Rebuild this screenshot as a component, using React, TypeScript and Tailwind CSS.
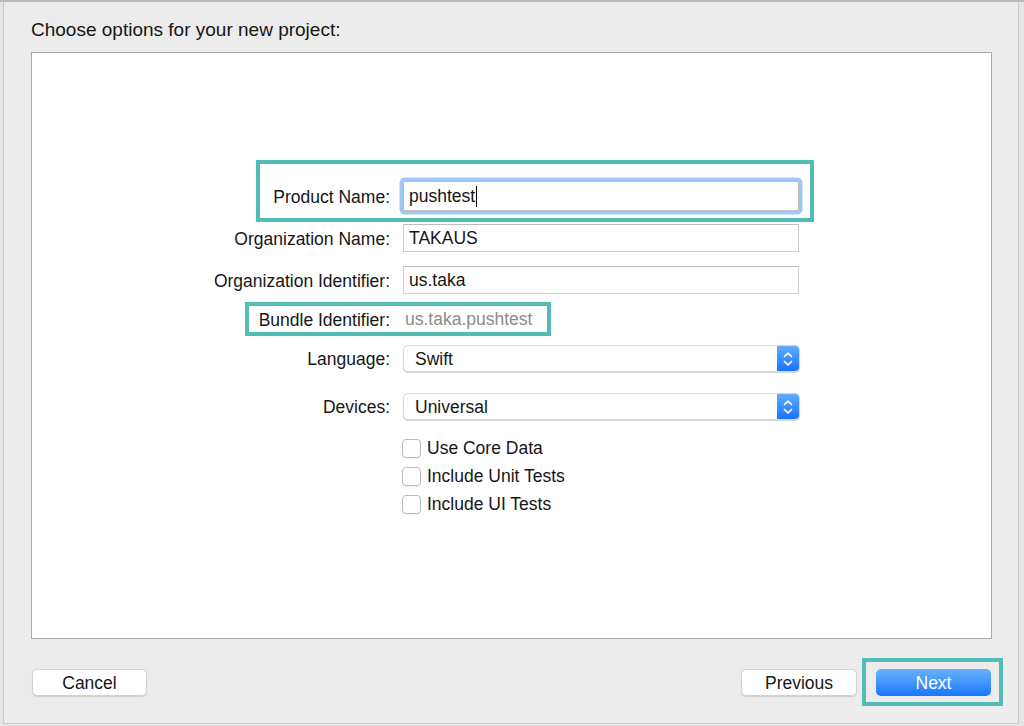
import type { ReactNode } from 'react';

const font = "font-['Liberation_Sans',Arial,sans-serif]";

function Stepper() {
  return (
    <div className="w-[22px] h-full bg-gradient-to-b from-[#5fabfc] to-[#1572fa] flex items-center justify-center">
      <svg width="12" height="18" viewBox="0 0 12 18" fill="none" stroke="white" strokeWidth="1.7" strokeLinecap="round" strokeLinejoin="round">
        <path d="M2.5 6.5 L6 3 L9.5 6.5" />
        <path d="M2.5 11.5 L6 15 L9.5 11.5" />
      </svg>
    </div>
  );
}

function Row({ label, children, className = '' }: { label: string; children: ReactNode; className?: string }) {
  return (
    <div className={`relative flex items-center gap-[13px] ${className}`}>
      <div className="w-[358px] pt-[1px] text-right text-[17.5px] leading-[22px] text-[#161616]">{label}</div>
      {children}
    </div>
  );
}

function TextField({ value }: { value: string }) {
  return (
    <div className="w-[396px] h-[28px] bg-white border border-[#cdcdcd] border-t-[#bdbdbd] flex items-center pl-[5px] pt-[1px] text-[17.5px] text-[#161616]">
      {value}
    </div>
  );
}

function Popup({ value }: { value: string }) {
  return (
    <div className="w-[397px] h-[27px] bg-white rounded-[5px] border border-[#d6d6d6] shadow-[0_1px_1px_rgba(0,0,0,0.18)] flex items-stretch overflow-hidden">
      <div className="flex-1 flex items-center pl-[11px] pt-[1px] text-[17.5px] text-[#161616]">{value}</div>
      <Stepper />
    </div>
  );
}

function Check({ label }: { label: string }) {
  return (
    <div className="h-[28px] flex items-center pl-[370px] gap-[6px]">
      <div className="w-[19px] h-[19px] bg-white rounded-[4px] border border-[#bcbcbc] shadow-[0_1px_0_rgba(0,0,0,0.05)]" />
      <span className="pt-[1px] text-[17.5px] text-[#161616]">{label}</span>
    </div>
  );
}

function Button({ label, primary = false, width }: { label: string; primary?: boolean; width: string }) {
  return primary ? (
    <div className={`${width} h-[27px] rounded-[5px] bg-gradient-to-b from-[#67b1fc] to-[#1478fb] flex items-center justify-center pt-[1px] text-[17.5px] text-white`}>
      {label}
    </div>
  ) : (
    <div className={`${width} h-[27px] rounded-[5px] bg-white border border-[#d2d2d2] shadow-[0_1px_1px_rgba(0,0,0,0.12)] flex items-center justify-center pt-[1px] text-[17.5px] text-[#161616]`}>
      {label}
    </div>
  );
}

export default function App() {
  return (
    <div className={`w-[1024px] h-[726px] bg-[#e6e6e6] border-t-2 border-[#b9b9b9] ${font}`}>
      <div className="ml-[3px] w-[1016px] h-[722px] border-x border-b border-[#cbcbcb] bg-[#ececec] flex flex-col pl-[27px]">
        <h1 className="mt-[17px] text-[19px] leading-[22px] text-[#161616]">Choose options for your new project:</h1>

        <div className="mt-[11px] w-[961px] h-[587px] bg-white border border-[#a9a9a9] pt-[128px]">
          <Row label="Product Name:">
            <div className="w-[396px] h-[30px] bg-white border border-[#bcbcbc] shadow-[0_0_0_3.5px_#a0c6f8] rounded-[2px] flex items-center pl-[5px] pt-[1px] text-[17.5px] text-[#161616]">
              pushtest
              <span className="ml-[1px] w-[1px] h-[21px] bg-black" />
            </div>
            <div className="pointer-events-none absolute left-[224px] top-[-21px] w-[558px] h-[62px] border-4 border-[#52bdb5]" />
          </Row>

          <Row label="Organization Name:" className="mt-[13px]">
            <TextField value="TAKAUS" />
          </Row>

          <Row label="Organization Identifier:" className="mt-[14px]">
            <TextField value="us.taka" />
          </Row>

          <Row label="Bundle Identifier:" className="mt-[14px] h-[22px]">
            <div className="pl-[2px] pt-[1px] text-[17.5px] text-[#8c8c8c]">us.taka.pushtest</div>
            <div className="pointer-events-none absolute left-[213px] top-[-6px] w-[306px] h-[34px] border-4 border-[#52bdb5]" />
          </Row>

          <Row label="Language:" className="mt-[15px]">
            <Popup value="Swift" />
          </Row>

          <Row label="Devices:" className="mt-[21px]">
            <Popup value="Universal" />
          </Row>

          <div className="mt-[14px]">
            <Check label="Use Core Data" />
            <Check label="Include Unit Tests" />
            <Check label="Include UI Tests" />
          </div>
        </div>

        <div className="mt-[30px] w-[961px] px-[1px] flex items-center">
          <Button label="Cancel" width="w-[115px]" />
          <div className="flex-1" />
          <Button label="Previous" width="w-[116px]" />
          <div className="relative ml-[19px]">
            <Button label="Next" primary width="w-[115px]" />
            <div className="pointer-events-none absolute left-[-14px] top-[-11px] w-[141px] h-[48px] border-4 border-[#52bdb5]" />
          </div>
        </div>
      </div>
    </div>
  );
}
